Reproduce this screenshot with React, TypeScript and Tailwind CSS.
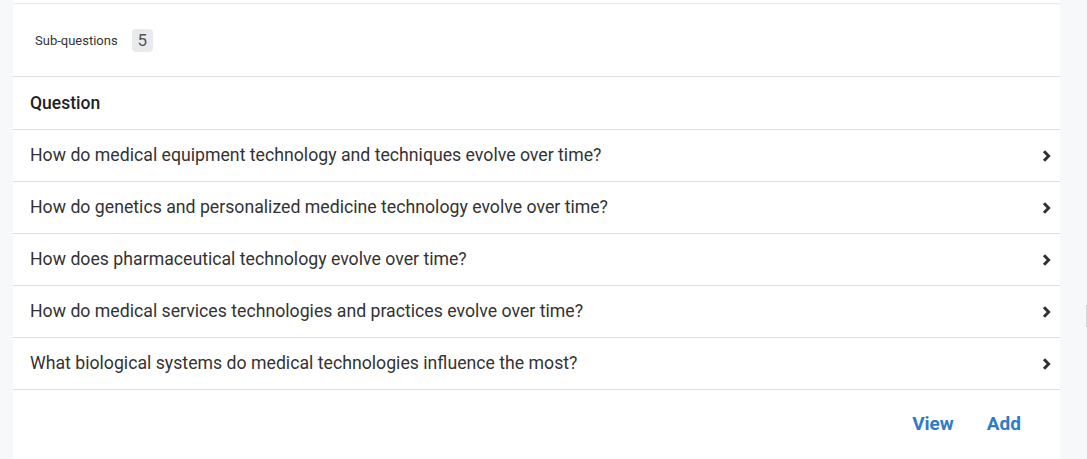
import React from "react";

const questions = [
  "How do medical equipment technology and techniques evolve over time?",
  "How do genetics and personalized medicine technology evolve over time?",
  "How does pharmaceutical technology evolve over time?",
  "How do medical services technologies and practices evolve over time?",
  "What biological systems do medical technologies influence the most?",
];

function Chevron() {
  return (
    <svg width="9" height="12" viewBox="0 0 9 12" className="shrink-0">
      <path d="M2 1.2 L6.6 6 L2 10.8" fill="none" stroke="#333" strokeWidth="3" strokeLinejoin="miter" />
    </svg>
  );
}

export default function App() {
  return (
    <div
      className="relative w-[1087px] h-[459px] bg-[#f7f8fa] overflow-hidden"
      style={{ fontFamily: "Roboto, 'Liberation Sans', sans-serif" }}
    >
      <div className="ml-[13px] w-[1047px] h-[3px] bg-white border-b border-[#ececec] box-content" />
      <div className="ml-[13px] w-[1047px] bg-white mt-px">
        <div className="h-[72px] flex items-center pl-[22px] border-b border-[#dedede]">
          <span className="text-[13px] text-[#333]">Sub-questions</span>
          <span className="ml-[14px] w-[21px] h-[23px] rounded-[4px] bg-[#e9eaee] flex items-center justify-center text-[17px] text-[#555]">
            5
          </span>
        </div>
        <div className="h-[53px] flex items-center pl-[17px] border-b border-[#dedede]">
          <span className="text-[17.5px] font-medium text-[#222]">Question</span>
        </div>
        {questions.map((q) => (
          <div key={q} className="h-[52px] flex items-center justify-between pl-[17px] pr-[9px] border-b border-[#dedede]">
            <span className="text-[17.7px] text-[#333]">{q}</span>
            <Chevron />
          </div>
        ))}
        <div className="h-[69px] flex items-center justify-end gap-[33px] pr-[39px]">
          <span className="text-[19px] font-bold text-[#2f7bc8]">View</span>
          <span className="text-[19px] font-bold text-[#2f7bc8]">Add</span>
        </div>
      </div>
      <div className="absolute right-0 top-[305px] w-px h-[22px] bg-[#d8d8d8]" />
    </div>
  );
}
